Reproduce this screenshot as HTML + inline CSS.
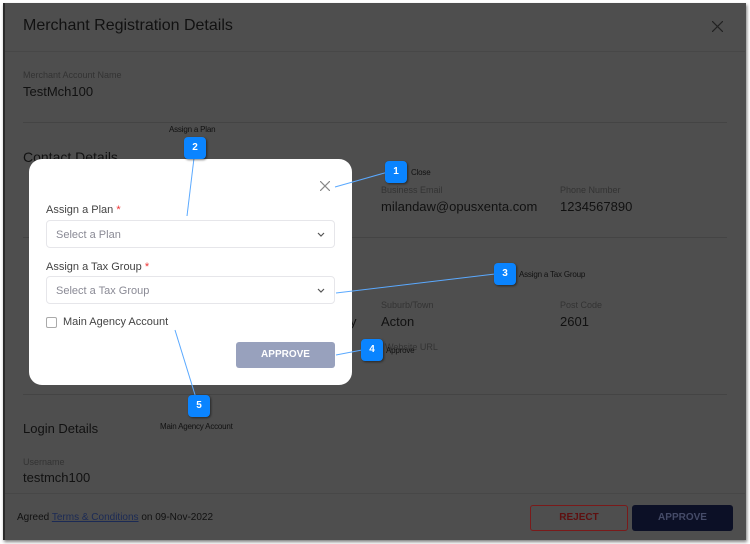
<!DOCTYPE html>
<html><head><style>
*{margin:0;padding:0;box-sizing:border-box}
body{width:750px;height:544px;background:#fff;font-family:"Liberation Sans",sans-serif;position:relative;overflow:hidden}
.frame{position:absolute;left:3px;top:3px;width:743px;height:537px;background:#4e4e4e;border-left:2px solid #2a2a2a;box-shadow:1px 2px 3px rgba(0,0,0,.5)}
.a{position:absolute;white-space:nowrap}
.lbl{font-size:9px;color:#333}
.val{font-size:13px;color:#111}
.hr{position:absolute;left:23px;width:704px;height:1px;background:#444}
.modal{position:absolute;left:29px;top:159px;width:323px;height:226px;background:#fff;border-radius:13px}
.field{position:absolute;left:17px;width:289px;height:28px;border:1px solid #e6e6ea;border-radius:4px;font-size:11px;color:#8a8a95;padding:8px 9px}
.badge{position:absolute;width:22px;height:22px;background:#0a84ff;border-radius:4px;color:#fff;font-size:10px;font-weight:bold;text-align:center;line-height:22px;box-shadow:1px 1px 2px rgba(0,0,0,.5)}
.cap{position:absolute;font-size:8px;color:#111;white-space:nowrap;letter-spacing:-.2px}
</style></head><body>
<div class="frame"></div>
<div class="a" style="left:23px;top:17px;font-size:16px;color:#111">Merchant Registration Details</div>
<svg class="a" style="left:712px;top:21px" width="11" height="11"><path d="M0 0L11 11M11 0L0 11" stroke="#222" stroke-width="1.2"/></svg>
<div class="hr" style="left:5px;width:740px;top:51px;background:#474747"></div>
<div class="a lbl" style="left:23px;top:70px">Merchant Account Name</div>
<div class="a val" style="left:23px;top:84px">TestMch100</div>
<div class="hr" style="top:122px"></div>
<div class="a" style="left:23px;top:149px;font-size:14px;color:#111">Contact Details</div>
<div class="a lbl" style="left:381px;top:185px">Business Email</div>
<div class="a val" style="left:381px;top:199px">milandaw@opusxenta.com</div>
<div class="a lbl" style="left:560px;top:185px">Phone Number</div>
<div class="a val" style="left:560px;top:199px">1234567890</div>
<div class="hr" style="top:237px"></div>
<div class="a lbl" style="left:381px;top:300px">Suburb/Town</div>
<div class="a val" style="left:381px;top:314px">Acton</div>
<div class="a lbl" style="left:560px;top:300px">Post Code</div>
<div class="a val" style="left:560px;top:314px">2601</div>
<div class="a val" style="left:350px;top:314px">y</div>
<div class="a lbl" style="left:385px;top:342px">Website URL</div>
<div class="hr" style="top:394px"></div>
<div class="a" style="left:23px;top:421px;font-size:13px;color:#111">Login Details</div>
<div class="a lbl" style="left:23px;top:457px">Username</div>
<div class="a val" style="left:23px;top:470px">testmch100</div>
<div class="hr" style="left:5px;width:740px;top:493px;background:#474747"></div>
<div class="a" style="left:17px;top:512px;font-size:10px;color:#111">Agreed <span style="color:#1b2a55;text-decoration:underline">Terms &amp; Conditions</span> on 09-Nov-2022</div>
<div class="a" style="left:530px;top:505px;width:98px;height:26px;border:1px solid #7a1a1a;border-radius:3px;color:#5e1010;font-size:10px;font-weight:bold;text-align:center;line-height:24px">REJECT</div>
<div class="a" style="left:632px;top:505px;width:101px;height:26px;background:#0c1026;border-radius:3px;color:#454b68;font-size:10px;font-weight:bold;text-align:center;line-height:26px">APPROVE</div>

<div class="modal">
<svg class="a" style="left:291px;top:22px" width="10" height="10"><path d="M0 0L10 10M10 0L0 10" stroke="#888" stroke-width="1.2"/></svg>
<div class="a" style="left:17px;top:45px;font-size:11px;color:#444">Assign a Plan <span style="color:#e33">*</span></div>
<div class="field" style="top:61px">Select a Plan<svg style="position:absolute;right:9px;top:11px" width="8" height="5"><path d="M1 1L4 4L7 1" stroke="#555" fill="none" stroke-width="1.2"/></svg></div>
<div class="a" style="left:17px;top:102px;font-size:11px;color:#444">Assign a Tax Group <span style="color:#e33">*</span></div>
<div class="field" style="top:117px">Select a Tax Group<svg style="position:absolute;right:9px;top:11px" width="8" height="5"><path d="M1 1L4 4L7 1" stroke="#555" fill="none" stroke-width="1.2"/></svg></div>
<div class="a" style="left:17px;top:158px;width:11px;height:11px;border:1px solid #aaa;border-radius:2px"></div>
<div class="a" style="left:34px;top:157px;font-size:11px;color:#444">Main Agency Account</div>
<div class="a" style="left:207px;top:183px;width:99px;height:26px;background:#98a1bd;border-radius:3px;color:#fff;font-size:10px;font-weight:bold;text-align:center;line-height:26px">APPROVE</div>
</div>

<svg class="a" style="left:0;top:0" width="750" height="544"><g stroke="#5aa9ff" stroke-width="1" fill="none">
<line x1="194" y1="158" x2="187" y2="216"/>
<line x1="335" y1="187" x2="388" y2="172"/>
<line x1="336" y1="293" x2="495" y2="274"/>
<line x1="336" y1="355" x2="362" y2="350"/>
<line x1="175" y1="330" x2="196" y2="398"/>
</g></svg>
<div class="cap" style="left:169px;top:125px">Assign a Plan</div>
<div class="badge" style="left:184px;top:137px">2</div>
<div class="badge" style="left:385px;top:161px">1</div>
<div class="cap" style="left:411px;top:168px">Close</div>
<div class="badge" style="left:494px;top:263px">3</div>
<div class="cap" style="left:519px;top:270px">Assign a Tax Group</div>
<div class="badge" style="left:361px;top:339px">4</div>
<div class="cap" style="left:386px;top:346px">Approve</div>
<div class="badge" style="left:188px;top:395px">5</div>
<div class="cap" style="left:160px;top:422px">Main Agency Account</div>
</body></html>
